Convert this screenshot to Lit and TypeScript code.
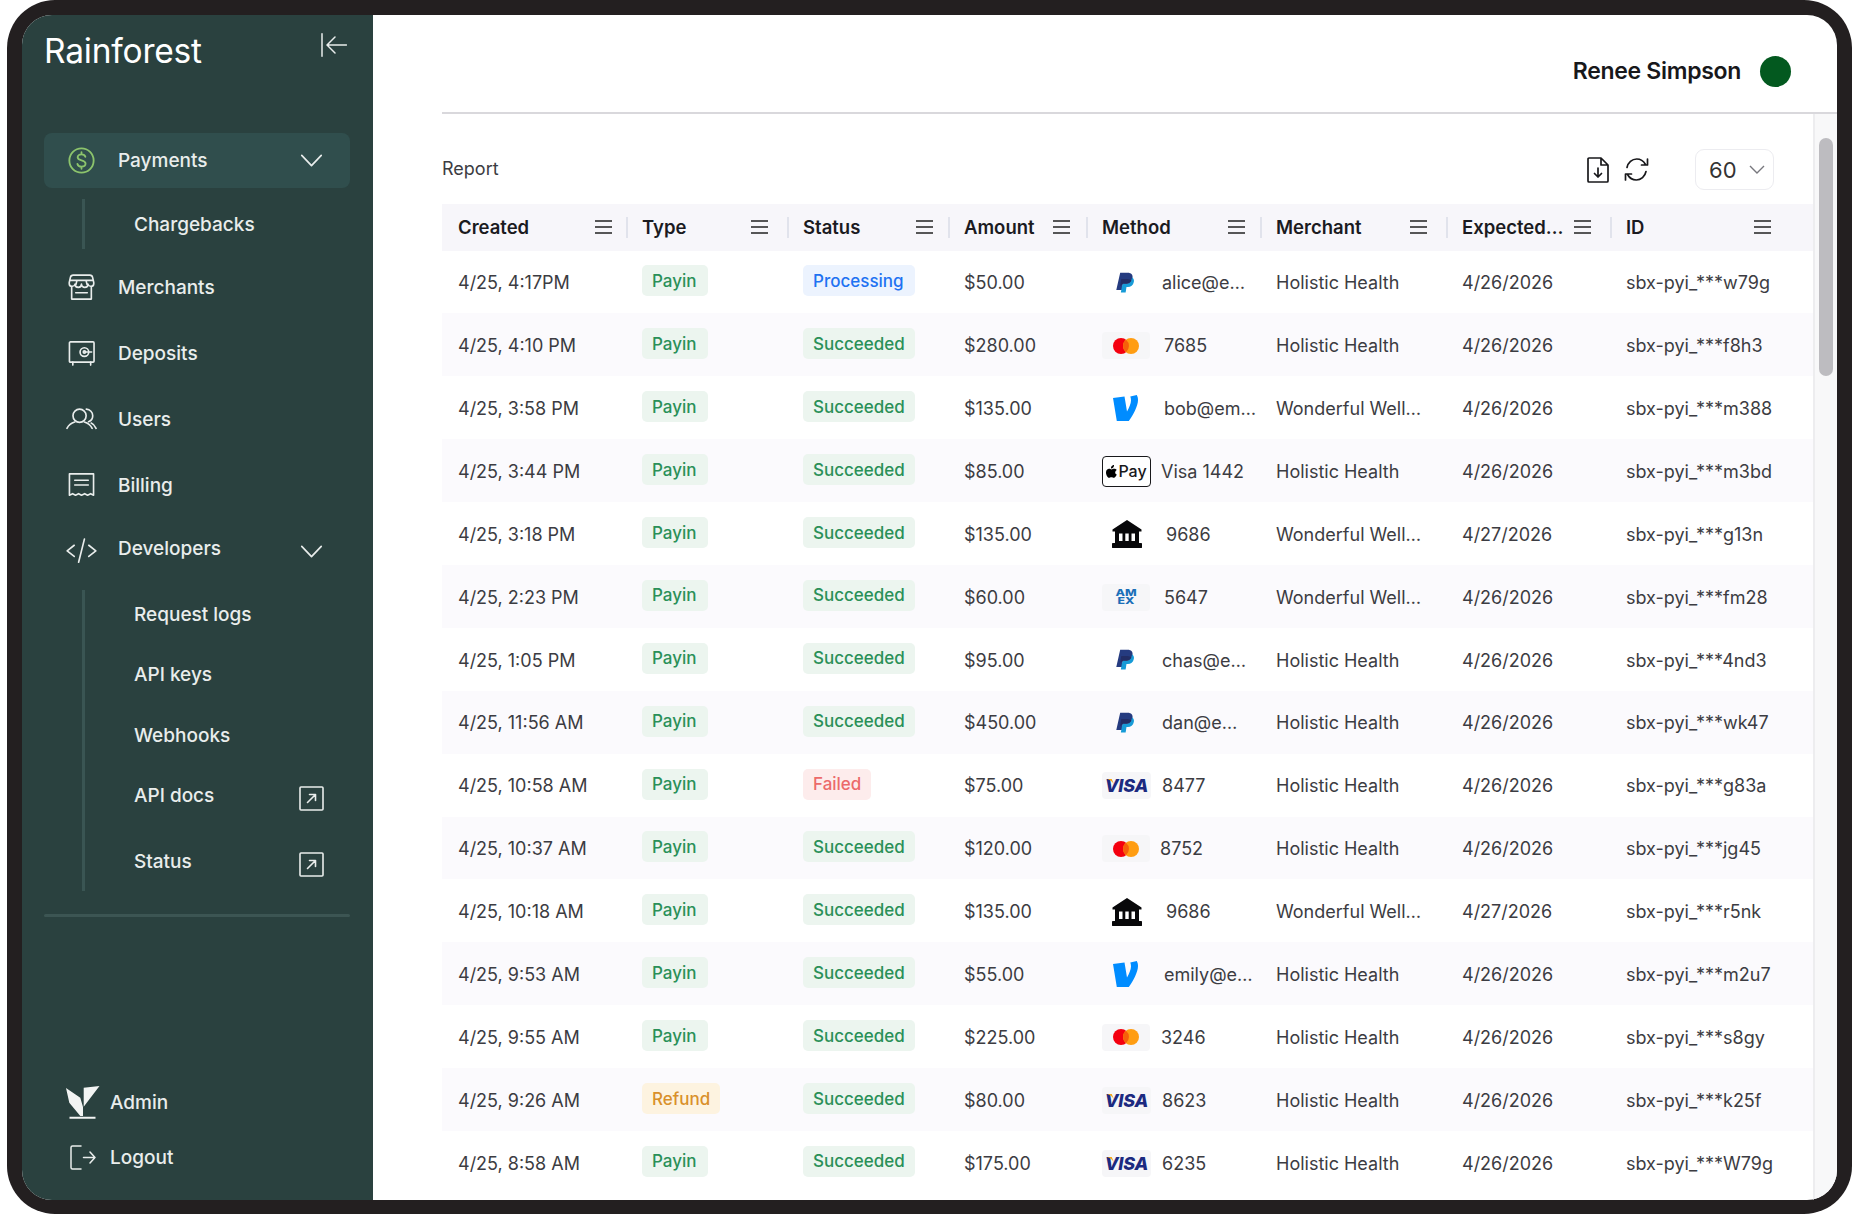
import { LitElement, html, css, svg } from "lit";
import { customElement } from "lit/decorators.js";

type Row = [string, string, string, string, string, string, number, string, string, string];

const rows: Row[] = [
  ["4/25, 4:17PM", "Payin", "Processing", "$50.00", "paypal", "alice@e…", 12, "Holistic Health", "4/26/2026", "sbx-pyi_***w79g"],
  ["4/25, 4:10 PM", "Payin", "Succeeded", "$280.00", "mc", "7685", 14, "Holistic Health", "4/26/2026", "sbx-pyi_***f8h3"],
  ["4/25, 3:58 PM", "Payin", "Succeeded", "$135.00", "venmo", "bob@em…", 14, "Wonderful Well…", "4/26/2026", "sbx-pyi_***m388"],
  ["4/25, 3:44 PM", "Payin", "Succeeded", "$85.00", "apple", "Visa 1442", 11, "Holistic Health", "4/26/2026", "sbx-pyi_***m3bd"],
  ["4/25, 3:18 PM", "Payin", "Succeeded", "$135.00", "bank", "9686", 16, "Wonderful Well…", "4/27/2026", "sbx-pyi_***g13n"],
  ["4/25, 2:23 PM", "Payin", "Succeeded", "$60.00", "amex", "5647", 14, "Wonderful Well…", "4/26/2026", "sbx-pyi_***fm28"],
  ["4/25, 1:05 PM", "Payin", "Succeeded", "$95.00", "paypal", "chas@e…", 12, "Holistic Health", "4/26/2026", "sbx-pyi_***4nd3"],
  ["4/25, 11:56 AM", "Payin", "Succeeded", "$450.00", "paypal", "dan@e…", 12, "Holistic Health", "4/26/2026", "sbx-pyi_***wk47"],
  ["4/25, 10:58 AM", "Payin", "Failed", "$75.00", "visa", "8477", 12, "Holistic Health", "4/26/2026", "sbx-pyi_***g83a"],
  ["4/25, 10:37 AM", "Payin", "Succeeded", "$120.00", "mc", "8752", 10, "Holistic Health", "4/26/2026", "sbx-pyi_***jg45"],
  ["4/25, 10:18 AM", "Payin", "Succeeded", "$135.00", "bank", "9686", 16, "Wonderful Well…", "4/27/2026", "sbx-pyi_***r5nk"],
  ["4/25, 9:53 AM", "Payin", "Succeeded", "$55.00", "venmo", "emily@e…", 14, "Holistic Health", "4/26/2026", "sbx-pyi_***m2u7"],
  ["4/25, 9:55 AM", "Payin", "Succeeded", "$225.00", "mc", "3246", 11, "Holistic Health", "4/26/2026", "sbx-pyi_***s8gy"],
  ["4/25, 9:26 AM", "Refund", "Succeeded", "$80.00", "visa", "8623", 12, "Holistic Health", "4/26/2026", "sbx-pyi_***k25f"],
  ["4/25, 8:58 AM", "Payin", "Succeeded", "$175.00", "visa", "6235", 12, "Holistic Health", "4/26/2026", "sbx-pyi_***W79g"],
];

const cols: [string, number][] = [
  ["Created", 14], ["Type", 19], ["Status", 15], ["Amount", 16],
  ["Method", 15], ["Merchant", 19], ["Expected…", 19], ["ID", 42],
];

const ic = (body: unknown, w = 28, h = 28, cls = "nav-ic") => html`<svg class="${cls}" viewBox="0 0 ${w} ${h}" fill="none" stroke="currentColor" stroke-width="1.7" stroke-linecap="round" stroke-linejoin="round">${body}</svg>`;

const icons = {
  dollar: ic(svg`<circle cx="14" cy="14" r="12.6" stroke="#8cc46c" stroke-width="1.9"/><path stroke="#8cc46c" stroke-width="1.9" d="M18 10.200c-.4-1.600-2-2.600-4-2.600-2.300 0-4 1.200-4 3.100 0 4.300 8.200 2.200 8.200 6.500 0 2-1.800 3.200-4.200 3.200-2.100 0-3.800-1-4.200-2.800M14 5.400v2.200M14 20.400v2.200"/>`),
  store: ic(svg`<path d="M5.500 1.200h17a3 3 0 0 1 3 2.300l1.200 5.300v1.400a2.700 2.700 0 0 1-2.700 2.500 3 3 0 0 1-3.300-2.200 3.200 3.200 0 0 1-6.700 0 3.200 3.200 0 0 1-6.700 0A3 3 0 0 1 4 12.700a2.700 2.700 0 0 1-2.700-2.500V8.800l1.200-5.300a3 3 0 0 1 3-2.300zM2 6.600h24M3.800 13v13h20.400V13M9.300 6.600l-1 4.200M18.700 6.600l1 4.200M8 19.500h12"/>`),
  safe: ic(svg`<rect x="1.500" y="2" width="25.500" height="21" rx="1"/><circle cx="17" cy="12.500" r="4.500"/><circle cx="17" cy="12.500" r="1.200"/><path d="M17 12.500H24.500M5 23v3M23.500 23v3"/>`),
  users: ic(svg`<circle cx="14" cy="8" r="6.800"/><path d="M1 21c1.500-3 4.500-5.500 8-6.500M19 14.500c3.500 1 6.500 3.500 8 6.500M21 1.200c3.800.3 6.600 3.200 6.600 6.800 0 2.800-1.800 5.200-4.300 6.200M26 15.500c2.300 1 3.900 3 5 5.500"/>`, 32, 22, "wide-ic"),
  bill: ic(svg`<path d="M1.500 2h25v22l-3-1.500-3.200 1.500-3-1.500-3.300 1.500-3-1.500-3.200 1.500-3-1.500-3.300 1.500zM7 8.500h14M7 13.500h14"/>`),
  code: ic(svg`<path d="M8.500 7.500 1.200 13.300 8.500 19M23.500 7.500l7.300 5.800-7.300 5.700M19 1.200 13 25"/>`, 32, 26, "wide-ic"),
  logout: html`<svg class="out-ic" viewBox="0 0 26 25" fill="none" stroke="currentColor" stroke-width="1.500" stroke-linecap="round" stroke-linejoin="round"><path d="M11 1H2.500A1.500 1.500 0 0 0 1 2.500v20A1.500 1.500 0 0 0 2.500 24H11M13.500 12.500H25M20 7l5 5.500-5 5.500"/></svg>`,
  logo: html`<svg class="logo-ic" viewBox="0 0 34 33" fill="#f2f4f3"><path d="M0 2 14.300 11.700 17 21V30H14.300L3.300 16.700zM17.700 1.700 33.500 0 17.700 20.700zM3.500 30.700H29.500V32.700H3.500z"/></svg>`,
  chev: html`<svg class="chev" viewBox="0 0 24 14" fill="none" stroke="currentColor" stroke-width="1.800" stroke-linecap="round" stroke-linejoin="round"><path d="M1.500 1.500 12 12.500 22.500 1.500"/></svg>`,
  ext: html`<svg class="ext" viewBox="0 0 25 25" fill="none" stroke="currentColor" stroke-width="1.600" stroke-linecap="round" stroke-linejoin="round"><rect x="1" y="1" width="23" height="23" rx="1"/><path d="M8.500 16.500 16 9M10.500 8.500H16.500V14.500"/></svg>`,
  collapse: html`<svg class="collapse" viewBox="0 0 26 24" fill="none" stroke="currentColor" stroke-width="1.500" stroke-linecap="round" stroke-linejoin="round"><path d="M1 .8v22.400M25.500 12H6.500M14 4l-8 8 8 8"/></svg>`,
  burger: html`<svg class="burger" viewBox="0 0 17 14" fill="none" stroke="currentColor" stroke-width="1.500"><path d="M0 1h17M0 7h17M0 13h17"/></svg>`,
};

const methodIcon = (k: string) => {
  switch (k) {
    case "paypal":
      return html`<svg class="m-free" style="width:19px;height:22px;margin-left:13px" viewBox="0 0 22 24"><path fill="#253b80" d="M6 0h8.500c4.500 0 6.500 2.500 5.700 6.300-.9 4.700-4 6.700-8.300 6.700H9.200L8 20H1.500z"/><path fill="#179bd7" d="M19.800 5.500c1.800 1 2.500 3 2 5.200-.8 4-3.500 5.800-7 5.800h-1.500l-1 6.500H6.800L8 16l1.200-3h2.700c4.300 0 7.200-2.500 7.900-7.500z"/><path fill="#222d65" d="M9.200 13h2.700c3.300 0 5.900-1.200 7.300-4-1.600-1.500-4.700-1.700-7-1.700H7.300L6 15.500z"/></svg>`;
    case "venmo":
      return html`<svg class="m-free" style="width:25px;height:26px;margin-left:11px" viewBox="0 0 25 26"><path fill="#008cff" d="M0 3 11.500 1.500 14 16.500C16 13 18 8.500 18 5.500c0-1.700-.3-3-.7-4L23.800 0c.8 1.500 1.200 3 1.200 5 0 6-5 15.500-9.200 21H3.800z"/></svg>`;
    case "bank":
      return html`<svg class="m-free" style="width:30px;height:28px;margin-left:10px" viewBox="0 0 30 28"><path fill="#08080a" fill-rule="evenodd" d="M15 0 29.500 9.500V11.500H27V23H28.500A2 2 0 0 1 28.500 28H1.500A2 2 0 0 1 1.500 23H3V11.500H.5V9.500zM7 13.500V21H10.500V13.500zM13.300 13.500V21H16.700V13.500zM19.500 13.500V21H23V13.500z"/></svg>`;
    case "mc":
      return html`<span class="card"><svg width="26" height="16" viewBox="0 0 26 16"><circle cx="8" cy="8" r="8" fill="#f4000f"/><circle cx="18" cy="8" r="8" fill="#ff9d12"/><path d="M13 1.800a8 8 0 0 1 0 12.400 8 8 0 0 1 0-12.400z" fill="#f6600a"/></svg></span>`;
    case "amex":
      return html`<span class="card amex"><span>AM EX</span></span>`;
    case "visa":
      return html`<span class="card visa"><svg class="tick" viewBox="0 0 8 6"><path d="M0 0h5.500L8 6C6 3 3 1 0 0z" fill="#f3a51c"/></svg>VISA</span>`;
    case "apple":
      return html`<span class="apple"><svg width="11" height="13" viewBox="0 0 11 13"><path fill="#000" d="M8 0c.1 1-.3 1.900-.8 2.500-.6.700-1.400 1.100-2.200 1C4.900 2.600 5.300 1.700 5.800 1.100 6.300.5 7.300 0 8 0zM10.800 9.400c-.5 1.100-1.600 3.400-3 3.400-.9 0-1.300-.6-2.400-.6-1.100 0-1.500.6-2.400.6C1.600 12.800 0 9.900 0 7.500 0 5 1.600 3.800 3.100 3.800c1 0 1.700.6 2.400.6.700 0 1.500-.7 2.700-.7 1 0 2 .5 2.600 1.400-2.300 1.300-1.900 4.300 0 4.300z"/></svg>Pay</span>`;
  }
  return null;
};

@customElement("app-root")
export class AppRoot extends LitElement {
  static styles = css`
    :host { display: block; width: 1856px; height: 1228px; background: #fff; font-family: Inter, "Noto Sans", sans-serif; overflow: hidden; }
    * { box-sizing: border-box; }
    .frame { margin-left: 7px; width: 1845px; height: 1214px; padding: 15px 15px 14px; background: #231f20; border-radius: 48px; }
    .screen { display: flex; width: 100%; height: 100%; border-radius: 30px; overflow: hidden; background: #fff; }

    .side { width: 350.500px; flex: none; display: flex; flex-direction: column; padding: 0 22.500px 0 22px; background: #2a413f; color: #e9edec; font-size: 19px; }
    .brand { display: flex; justify-content: space-between; height: 118px; padding-top: 16px; }
    .brand b { font-weight: 400; font-size: 33.500px; line-height: 40px; color: #fff; letter-spacing: -.2px; }
    .collapse { width: 26px; height: 24px; margin: 2px 3px 0 0; }
    .item { display: flex; align-items: center; height: 66px; padding-left: 24px; padding-right: 27px; gap: 23px; font-weight: 500; }
    .item span { flex: 1; }
    .item.active { height: 55px; background: #304e4d; border-radius: 8px; }
    .item.dev { height: 60px; padding-top: 6px; }
    .item.dev span { margin-top: -6px; }
    .nav-ic { width: 27px; height: 27px; flex: none; }
    .wide-ic { width: 31px; flex: none; margin: 0 -2px; }
    .chev { width: 23px; height: 13px; flex: none; }
    .sub { margin-left: 38px; border-left: 3px solid #3a5553; padding-left: 49px; display: flex; flex-direction: column; gap: 12.500px; font-weight: 500; }
    .sub.one { margin-top: 11px; margin-bottom: 5px; }
    .sub.one div { height: 50px; }
    .sub.many { margin-top: 12px; padding-bottom: 6px; }
    .sub div { height: 48px; display: flex; align-items: center; justify-content: space-between; padding-right: 26px; }
    .sub div.last { margin-top: 5px; }
    .ext { width: 25px; height: 25px; flex: none; margin-top: 6px; }
    .rule { height: 3px; margin-top: 23px; background: #3c5553; border-radius: 2px; }
    .foot { margin-top: auto; padding-bottom: 26px; display: flex; flex-direction: column; gap: 22px; font-weight: 500; }
    .foot div { display: flex; align-items: center; height: 33px; }
    .logo-ic { width: 34px; height: 33px; margin-left: 22px; margin-right: 10px; }
    .out-ic { width: 26px; height: 25px; margin-left: 26px; margin-right: 14px; }

    .main { flex: 1; min-width: 0; display: flex; flex-direction: column; padding-left: 69.500px; color: #3c3c42; font-size: 18px; }
    .top { flex: none; height: 99px; border-bottom: 2px solid #d9d8dc; display: flex; justify-content: flex-end; align-items: center; padding-right: 46px; padding-top: 15px; gap: 19px; }
    .top strong { font-size: 23px; font-weight: 600; color: #18181b; letter-spacing: -.3px; }
    .top i { width: 31px; height: 31px; border-radius: 50%; background: #03591f; }
    .body { flex: 1; min-height: 0; display: flex; }
    .content { flex: 1; min-width: 0; overflow: hidden; }
    .track { width: 24px; flex: none; background: #f8f8f9; border-left: 2px solid #ededef; padding: 24px 4px 0; }
    .thumb { height: 238px; background: #bdbcc0; border-radius: 8px; }
    .tools { height: 90px; display: flex; align-items: flex-start; padding-top: 35px; padding-right: 39px; }
    .tools .rep { flex: 1; line-height: 39px; font-size: 18px; }
    .tool { flex: none; color: #18181b; }
    .t1 { width: 22px; height: 26px; margin-top: 8px; }
    .t2 { width: 25px; height: 25px; margin: 8px 46px 0 15px; }
    .select { flex: none; width: 79px; height: 41px; border: 1.500px solid #ececf0; border-radius: 9px; display: flex; align-items: center; justify-content: space-between; padding: 0 8px 0 13px; font-size: 22px; color: #333; }
    .select svg { width: 16px; height: 9px; color: #77777d; }
    .grid { display: grid; grid-template-columns: 184px 161px 161px 138px 174px 186px 164px 203px; align-items: center; }
    .head { height: 46.500px; background: #f7f6fa; font-weight: 600; font-size: 18.500px; color: #1b1b1f; }
    .hc { display: flex; align-items: center; height: 100%; }
    .hc .lab { flex: 1; padding-left: 14px; white-space: nowrap; }
    .hc:first-child .lab { padding-left: 16px; }
    .sep { flex: none; width: 2px; height: 21px; background: #e1e3ec; }
    .burger { width: 17px; height: 14px; flex: none; color: #222; }
    .row { height: 62.900px; }
    .row.alt { background: #fbfafd; }
    .row > div { padding-left: 16px; padding-top: 1.500px; white-space: nowrap; }
    .row > .tag { padding-top: 0; }
    .pill { display: inline-flex; align-items: center; height: 31px; padding: 0 10px; border-radius: 5px; font-size: 17px; font-weight: 500; margin-top: -2px; }
    .payin { width: 66px; background: #ecf5ef; color: #2a9058; }
    .succ { width: 112px; background: #ecf5ef; color: #2a9058; }
    .proc { width: 112px; background: #ecf3fe; color: #1e72f2; }
    .fail { background: #fdecec; color: #ec6a6a; }
    .refund { background: #fdf3e0; color: #d9902a; }
    .method { display: flex; align-items: center; }
    .slot { width: 48px; flex: none; display: flex; align-items: center; }
    .card { width: 48px; height: 27px; flex: none; display: flex; align-items: center; justify-content: center; background: #f6f6f8; border-radius: 4px; }
    .card.amex { color: #1b6fb8; font-weight: 800; font-size: 9.500px; line-height: 8px; text-align: center; white-space: normal; }
    .card.amex span { width: 16px; transform: scaleX(1.3); }
    .card.visa { position: relative; width: 49px; color: #1c2a80; font-style: italic; font-weight: 800; font-size: 18px; letter-spacing: -.2px; }
    .tick { position: absolute; left: 5px; top: 7px; width: 7px; height: 5px; }
    .apple { width: 49px; height: 31px; flex: none; display: flex; align-items: center; justify-content: center; gap: 1px; border: 1.500px solid #18181b; border-radius: 4px; font-size: 16px; font-weight: 500; color: #18181b; background: #fff; }
    .m-free { flex: none; display: block; }
  `;

  private pill(text: string) {
    const cls: Record<string, string> = { Payin: "payin", Refund: "refund", Succeeded: "succ", Processing: "proc", Failed: "fail" };
    return html`<span class="pill ${cls[text]}">${text}</span>`;
  }

  render() {
    return html`
      <div class="frame"><div class="screen">
        <aside class="side">
          <div class="brand"><b>Rainforest</b>${icons.collapse}</div>
          <div class="item active">${icons.dollar}<span>Payments</span>${icons.chev}</div>
          <div class="sub one"><div><span>Chargebacks</span></div></div>
          <div class="item">${icons.store}<span>Merchants</span></div>
          <div class="item">${icons.safe}<span>Deposits</span></div>
          <div class="item">${icons.users}<span>Users</span></div>
          <div class="item">${icons.bill}<span>Billing</span></div>
          <div class="item dev">${icons.code}<span>Developers</span>${icons.chev}</div>
          <div class="sub many">
            <div><span>Request logs</span></div>
            <div><span>API keys</span></div>
            <div><span>Webhooks</span></div>
            <div><span>API docs</span>${icons.ext}</div>
            <div class="last"><span>Status</span>${icons.ext}</div>
          </div>
          <div class="rule"></div>
          <div class="foot">
            <div>${icons.logo}Admin</div>
            <div>${icons.logout}Logout</div>
          </div>
        </aside>
        <main class="main">
          <header class="top"><strong>Renee Simpson</strong><i></i></header>
          <div class="body">
            <div class="content">
              <div class="tools">
                <div class="rep">Report</div>
                <svg class="tool t1" viewBox="0 0 22 26" fill="none" stroke="currentColor" stroke-width="1.700" stroke-linecap="round" stroke-linejoin="round"><path d="M14 1H2a1 1 0 0 0-1 1v22a1 1 0 0 0 1 1h18a1 1 0 0 0 1-1V8zM14 1v7h7M11 11v9M7.500 16.500 11 20l3.500-3.500"/></svg>
                <svg class="tool t2" viewBox="0 0 25 25" fill="none" stroke="currentColor" stroke-width="1.700" stroke-linecap="round" stroke-linejoin="round"><path d="M3 10.500C4 5.500 8 2 12.700 2c3.600 0 6.800 2 8.800 5.500M23.500 2v6h-6M22 14.500C21 19.500 17 23 12.300 23c-3.600 0-6.800-2-8.800-5.500M1.500 23v-6h6"/></svg>
                <div class="select">60<svg viewBox="0 0 16 9" fill="none" stroke="currentColor" stroke-width="1.400"><path d="M1 1l7 7 7-7"/></svg></div>
              </div>
              <div class="grid head">
                ${cols.map(([n, pad], i) => html`<div class="hc" style="padding-right:${pad}px">${i ? html`<span class="sep"></span>` : ""}<span class="lab">${n}</span>${icons.burger}</div>`)}
              </div>
              ${rows.map((r, i) => html`
                <div class="grid row ${i % 2 ? "alt" : ""}">
                  <div>${r[0]}</div>
                  <div class="tag">${this.pill(r[1])}</div>
                  <div class="tag">${this.pill(r[2])}</div>
                  <div>${r[3]}</div>
                  <div class="method"><span class="slot">${methodIcon(r[4])}</span><span style="margin-left:${r[6]}px">${r[5]}</span></div>
                  <div>${r[7]}</div>
                  <div>${r[8]}</div>
                  <div>${r[9]}</div>
                </div>`)}
            </div>
            <div class="track"><div class="thumb"></div></div>
          </div>
        </main>
      </div></div>
    `;
  }
}
